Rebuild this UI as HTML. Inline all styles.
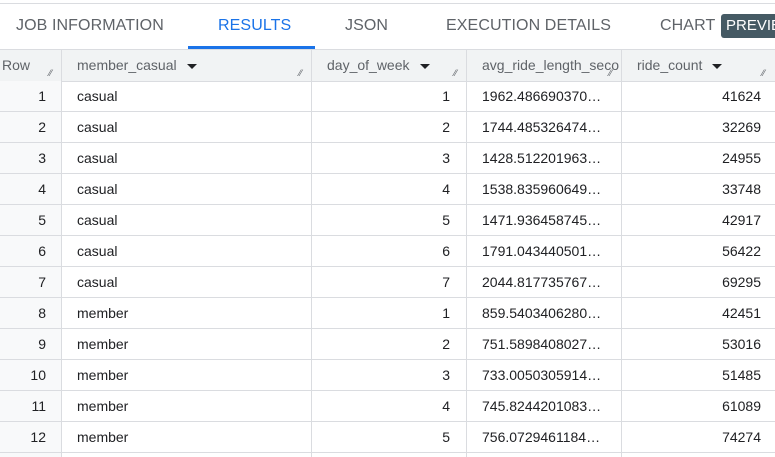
<!DOCTYPE html>
<html style="overflow:hidden;height:457px"><head><style>
body{margin:0;width:775px;height:457px;overflow:hidden;background:#fff;font-family:"Liberation Sans",Roboto,sans-serif;position:relative}
.top{position:absolute;left:0;top:3px;width:775px;height:1px;background:#dadce0}
.tab{position:absolute;top:17px;font-size:16px;color:#5f6368;letter-spacing:0.1px}
.ul{position:absolute;left:188px;top:46px;width:127px;height:3px;background:#1a73e8}
.hdr{position:absolute;left:0;top:49px;width:775px;height:31px;background:#f1f3f4;border-top:1px solid #dadce0;border-bottom:1px solid #dadce0}
.h{position:absolute;top:57px;font-size:14px;color:#5f6368}
.tri{display:inline-block;width:0;height:0;border-left:5px solid transparent;border-right:5px solid transparent;border-top:5px solid #202124;margin-left:10px;vertical-align:middle}
.vl{position:absolute;top:49px;width:1px;height:408px;background:#dadce0}
.row{position:absolute;left:0;width:775px;height:30px;border-bottom:1px solid #dadce0;font-size:14px;color:#202124}
.row span{position:absolute;top:7px}
.rn{position:absolute;left:0;top:81px;width:61px;height:376px;background:#f8f9fa}
.grip{position:absolute;top:68px;font-size:9px;color:#5f6368}
.prev{position:absolute;left:721px;top:14px;width:60px;height:24px;background:#455a64;border-radius:3px;color:#fff;font-size:15px;line-height:24px;padding-left:5px;box-sizing:border-box}
</style></head><body>
<div class="top"></div>
<div class="tab" style="left:16px">JOB INFORMATION</div>
<div class="tab" style="left:218px;color:#1a73e8">RESULTS</div>
<div class="tab" style="left:345px">JSON</div>
<div class="tab" style="left:446px">EXECUTION DETAILS</div>
<div class="tab" style="left:660px">CHART</div>
<div class="prev">PREVIEW</div>
<div class="ul"></div>
<div class="hdr"></div>
<div class="rn"></div>
<div class="h" style="left:2px">Row</div>
<div class="h" style="left:77px">member_casual<span class="tri"></span></div>
<div class="h" style="left:327px">day_of_week<span class="tri"></span></div>
<div class="h" style="left:482px;width:137px;overflow:hidden;white-space:nowrap">avg_ride_length_seconds</div>
<div class="h" style="left:637px">ride_count<span class="tri"></span></div>
<div class="grip" style="left:49px">⁄⁄</div><div class="grip" style="left:299px">⁄⁄</div><div class="grip" style="left:454px">⁄⁄</div><div class="grip" style="left:609px">⁄⁄</div><div class="grip" style="left:762px">⁄⁄</div>
<div id="rows"></div>
<div class="vl" style="left:61px"></div><div class="vl" style="left:311px"></div><div class="vl" style="left:466px"></div><div class="vl" style="left:621px"></div>
<script>
var d=[["casual",1,"1962.486690370…",41624],["casual",2,"1744.485326474…",32269],["casual",3,"1428.512201963…",24955],["casual",4,"1538.835960649…",33748],["casual",5,"1471.936458745…",42917],["casual",6,"1791.043440501…",56422],["casual",7,"2044.817735767…",69295],["member",1,"859.5403406280…",42451],["member",2,"751.5898408027…",53016],["member",3,"733.0050305914…",51485],["member",4,"745.8244201083…",61089],["member",5,"756.0729461184…",74274]];
var h="";d.forEach(function(r,i){h+='<div class="row" style="top:'+(81+i*31)+'px"><span style="right:729px">'+(i+1)+'</span><span style="left:77px">'+r[0]+'</span><span style="right:325px">'+r[1]+'</span><span style="left:482px">'+r[2]+'</span><span style="right:14px">'+r[3]+'</span></div>';});
document.getElementById("rows").innerHTML=h;
</script>
</body></html>
